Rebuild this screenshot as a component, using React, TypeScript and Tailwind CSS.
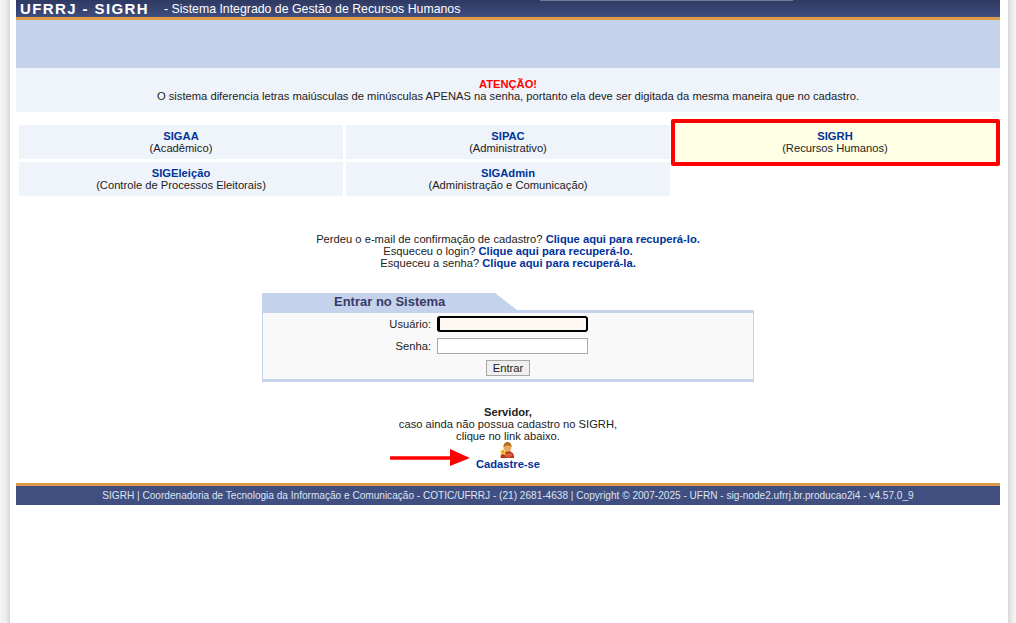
const SYSTEMS = [
  { name: 'SIGAA', desc: '(Acadêmico)' },
  { name: 'SIPAC', desc: '(Administrativo)' },
  { name: 'SIGEleição', desc: '(Controle de Processos Eleitorais)' },
  { name: 'SIGAdmin', desc: '(Administração e Comunicação)' },
]

function Tile({ name, desc }: { name: string; desc: string }) {
  return (
    <div className="h-[34px] flex flex-col items-center justify-center bg-[#eff3fa]">
      <a href="#" className="font-bold text-[#003399]">{name}</a>
      <span>{desc}</span>
    </div>
  )
}

function UserIcon() {
  return (
    <svg className="mr-[2px]" width="16" height="16" viewBox="0 0 16 16">
      <path d="M1.500 16c-.2-3.500 1.500-6 4-7h5c3 1 4.800 3.500 4.500 7z" fill="#b5341c" />
      <path d="M5 10c2 2 6 2 7.500.5l1 3.500-3.500 1.500-4-1z" fill="#d9603a" />
      <ellipse cx="8.500" cy="5" rx="4" ry="4.800" fill="#eba85e" />
      <path d="M4.500 5.200C4.300 1.600 6.600 0 8.500 0s4.200 1.600 4 5.200C11.300 3 6.500 2.800 4.500 5.200z" fill="#a8701f" />
      <path d="M4 6.500l1.200 2.200 2.500.4-1.800 1.700.4 2.500L4 12.100l-2.300 1.200.4-2.500L.3 9.100l2.500-.4z" fill="#f7cf45" />
      <circle cx="4" cy="9.800" r="1.200" fill="#e8902c" />
    </svg>
  )
}

export default function App() {
  return (
    <div className="h-[623px] overflow-hidden bg-[linear-gradient(90deg,#f6f6f6_0,#ececec_6px,#d8d8d8_10px,#ffffff_10px,#ffffff_1008px,#d8d8d8_1008px,#ececec_1012px,#f6f6f6_1016px)] font-['Liberation_Sans',Arial,sans-serif] text-[11.2px] leading-[12px] text-[#222222]">
      <div className="mx-4 w-[984px] flex flex-col">
        <header className="relative h-5 flex items-start border-b-[3px] border-[#dc9b44] bg-[linear-gradient(180deg,#2f3a62,#3f4d7f)] text-white">
          <span className="ml-1 w-[144px] text-[15px] leading-[17px] font-bold tracking-[1.4px]">UFRRJ - SIGRH</span>
          <span className="text-[12.320px] leading-[19px]">- Sistema Integrado de Gestão de Recursos Humanos</span>
          <div className="absolute top-0 left-[524px] h-px w-[253px] bg-[#707a98]" />
        </header>
        <div className="h-12 bg-[#c4d2eb]" />
        <div className="h-11 flex flex-col items-center justify-end pb-[10px] bg-[#eff3fa]">
          <strong className="text-[#ff0000]">ATENÇÃO!</strong>
          <p>O sistema diferencia letras maiúsculas de minúsculas APENAS na senha, portanto ela deve ser digitada da mesma maneira que no cadastro.</p>
        </div>

        <div className="mt-[7px] ml-[3px] grid grid-cols-[324px_324px_329px] gap-x-[3px] items-start">
          <div className="col-start-1 row-start-1 mt-[6px]"><Tile {...SYSTEMS[0]} /></div>
          <div className="col-start-2 row-start-1 mt-[6px]"><Tile {...SYSTEMS[1]} /></div>
          <div className="col-start-3 row-start-1 -ml-[2px] w-[329px] h-[47px] flex flex-col items-center justify-center rounded-[2px] border-[4px] border-[#ff0000] bg-[#ffffe6] pb-[1px] pr-[1px]">
            <a href="#" className="font-bold text-[#003399]">SIGRH</a>
            <span>(Recursos Humanos)</span>
          </div>
          <div className="col-start-1 row-start-2 mt-[-4px]"><Tile {...SYSTEMS[2]} /></div>
          <div className="col-start-2 row-start-2 mt-[-4px]"><Tile {...SYSTEMS[3]} /></div>
        </div>

        <div className="mt-[37px] flex flex-col items-center">
          <p>Perdeu o e-mail de confirmação de cadastro? <a href="#" className="font-bold text-[#003399]">Clique aqui para recuperá-lo.</a></p>
          <p>Esqueceu o login? <a href="#" className="font-bold text-[#003399]">Clique aqui para recuperá-lo.</a></p>
          <p>Esqueceu a senha? <a href="#" className="font-bold text-[#003399]">Clique aqui para recuperá-la.</a></p>
        </div>

        <div className="mt-[24px] ml-[246px] w-[492px]">
          <div className="relative h-5 w-[256px] bg-[#c4d2eb] [clip-path:polygon(0_0,233px_0,255px_17px,255px_100%,0_100%)]">
            <h2 className="pl-[72px] text-[13px] leading-[17px] font-bold text-[#3a3a68]">Entrar no Sistema</h2>
          </div>
          <div className="-mt-[3px] h-[72px] border-x border-y-[3px] border-[#c4d2eb] bg-[#f9f9f9] pt-[2px]">
            <div className="flex items-center h-[18px]">
              <label className="w-[168px] text-right">Usuário:</label>
              <input autoFocus className="ml-[6px] h-4 w-[151px] rounded-[3px] border-2 border-l-[3px] border-black bg-[#fdf8f2] outline-none" />
            </div>
            <div className="mt-[5px] flex items-center h-4">
              <label className="w-[168px] text-right">Senha:</label>
              <input type="password" className="ml-[6px] h-4 w-[151px] border border-[#a9a9a9] bg-white outline-none" />
            </div>
            <div className="mt-[6px] flex justify-center">
              <button className="h-4 w-11 border border-[#a9a9a9] bg-[#efefef] text-[11.2px] leading-[12px]">Entrar</button>
            </div>
          </div>
        </div>

        <div className="relative mt-[24px] flex flex-col items-center">
          <strong>Servidor,</strong>
          <span>caso ainda não possua cadastro no SIGRH,</span>
          <span>clique no link abaixo.</span>
          <UserIcon />
          <a href="#" className="font-bold text-[#003399]">Cadastre-se</a>
          <svg className="absolute left-[374px] top-[43px]" width="82" height="20" viewBox="0 0 82 20">
            <path d="M1 9h60" stroke="#ff0000" strokeWidth="3.500" strokeLinecap="round" />
            <path d="M60 0l20 9-20 8z" fill="#ff0000" />
          </svg>
        </div>

        <footer className="mt-[13px] h-[22px] border-t-[3px] border-[#dc9b44] bg-[#404f80] text-center text-[10.080px] leading-[19px] text-[#dde4f4]">
          SIGRH | Coordenadoria de Tecnologia da Informação e Comunicação - COTIC/UFRRJ - (21) 2681-4638 | Copyright © 2007-2025 - UFRN - sig-node2.ufrrj.br.producao2i4 - v4.57.0_9
        </footer>
      </div>
    </div>
  )
}
